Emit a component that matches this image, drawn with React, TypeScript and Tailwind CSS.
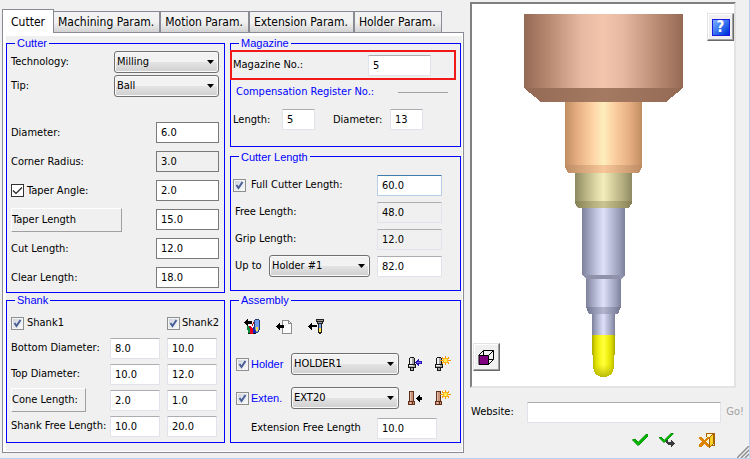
import * as React from "react";

function Check({ id, flat }: { id: string; flat?: boolean }) {
  return (
    <span className="relative block size-[13px] shrink-0">
      <input
        id={id}
        type="checkbox"
        defaultChecked
        className={`peer block size-[13px] appearance-none border ${
          flat
            ? "border-[#333] bg-white"
            : "border-[#8e8f8f] bg-linear-to-br from-[#c9d0d8] to-white shadow-[inset_0_0_0_1px_#f4f4f4]"
        }`}
      />
      <svg
        viewBox="0 0 13 13"
        className="pointer-events-none absolute inset-0 hidden peer-checked:block"
      >
        <path
          d={flat ? "M2 6.5 5 9.5 11 3.5" : "M3.5 6 5.5 9 9.5 3"}
          fill="none"
          stroke={flat ? "#222" : "#4a5f97"}
          strokeWidth={flat ? 1.2 : 2}
        />
      </svg>
    </span>
  );
}

function Select({
  id,
  label,
  value,
  className,
}: {
  id: string;
  label?: string;
  value: string;
  className: string;
}) {
  return (
    <span className={`relative block h-[22px] ${className}`}>
      <select
        id={id}
        aria-label={label}
        defaultValue={value}
        className="block h-full w-full appearance-none rounded-[3px] border border-[#707070] bg-linear-to-b from-[#f2f2f2] from-50% via-[#e4e4e4] via-50% to-[#cfcfcf] pl-[2px] shadow-[inset_0_0_0_1px_#fafafa]"
      >
        <option>{value}</option>
      </select>
      <svg
        viewBox="0 0 7 4"
        className="pointer-events-none absolute top-[9px] right-[5px] h-1 w-[7px]"
      >
        <path d="M0 0H7L3.5 4Z" fill="#000" />
      </svg>
    </span>
  );
}

function Field({
  id,
  label,
  value,
  className,
  kind = "soft",
  off,
}: {
  id: string;
  label?: string;
  value: string;
  className: string;
  kind?: "soft" | "hard" | "focus";
  off?: boolean;
}) {
  const edge = {
    soft: "border-[#e2e3ea] border-t-[#abadb3] rounded-[1px]",
    hard: "border-[#7a7a7a]",
    focus: "border-[#b5cfe7] border-t-[#3d7bad] rounded-[1px]",
  }[kind];
  return (
    <input
      id={id}
      aria-label={label}
      defaultValue={value}
      readOnly={off}
      className={`block h-[21px] shrink-0 border pl-1 ${edge} ${
        off ? "bg-[#f0f0f0]" : "bg-white"
      } ${className}`}
    />
  );
}

function Group({
  title,
  children,
}: {
  title: string;
  children: React.ReactNode;
}) {
  return (
    <fieldset className="min-w-0 border border-[#0000ff]">
      <legend className="ml-2 h-[14px] px-[2px] font-['Liberation_Sans',sans-serif] leading-[14px] text-[#0000ff]">
        {title}
      </legend>
      {children}
    </fieldset>
  );
}

function RaisedButton({
  children,
  className,
}: {
  children: React.ReactNode;
  className: string;
}) {
  return (
    <button
      className={`block h-6 border border-t-white border-r-[#a0a0a0] border-b-[#a0a0a0] border-l-white text-left ${className}`}
    >
      {children}
    </button>
  );
}

function IconButton({
  label,
  children,
}: {
  label: string;
  children: React.ReactNode;
}) {
  return (
    <button aria-label={label} className="block size-4 shrink-0">
      <svg viewBox="0 0 16 16" className="size-4" shapeRendering="crispEdges">
        {children}
      </svg>
    </button>
  );
}

function ToolLibraryIcon() {
  return (
    <>
      <path d="M0 3h1V2h1V1h1V0h1v2h4v3H4v2H3V6H2V5H1V4H0Z" fill="#000" />
      <path d="M3 7h3v8H5v-1H4v-3H3Z" fill="#008a3c" />
      <path d="M6 7h3v8H6Z" fill="#e00020" />
      <path d="M9 8h3v7H9Z" fill="#1020d0" />
      <path d="M5 5h2v1h1v1h1v2H8V8H7V7H5ZM9 4h1v2H9Z" fill="#fff" />
      <path d="M5 7h1v1h1v1H5ZM9 3h1v2H9ZM8 5h1v2H8Z" fill="#c00018" />
      <path d="M11 1h4v10h-1v2h-2v-2h-1Z" fill="#6f9cf0" />
      <path d="M12 8h2v4h-2Z" fill="#ffe14a" />
      <path d="M11 0h4v1h-4ZM10 1h1v10h-1ZM15 1h1v10h-1ZM11 11h1v2h2v-2h1v2h-1v1h-2v-1h-1Z" fill="#24406e" />
      <path d="M4 14h2v1H4ZM9 14h3v1H9Z" fill="#111" />
    </>
  );
}

function ImportPageIcon() {
  return (
    <>
      <path d="M6.5 1.5h6l3 3v10h-9Z" fill="#fafafa" stroke="#8c8c8c" />
      <path d="M12.5 1.5v3h3" fill="none" stroke="#8c8c8c" />
      <path d="M0 7h1V6h1V5h1V4h1v2h4v3H4v2H3v-1H2V9H1V8H0Z" fill="#000" />
    </>
  );
}

function ImportToolIcon() {
  return (
    <>
      <path d="M0 7h1V6h1V5h1V4h1v2h5v2H4v3H3v-1H2V9H1V8H0Z" fill="#000" />
      <path d="M8 0h8v3h-1v2H9V3H8Z" fill="#222" />
      <path d="M9 1h6v1H9ZM10 3h4v1h-4Z" fill="#9c9c9c" />
      <path d="M10 5h4v9h-1v1h-2v-1h-1Z" fill="#222" />
      <path d="M11 5h2v4h-2Z" fill="#7da6f2" />
      <path d="M11 9h2v4h-2Z" fill="#ffe14a" />
    </>
  );
}

function Star() {
  return (
    <>
      <path
        d="M10 0h1v2h1v1h1V1h1v2h-1v1h3v1h-3v1h1v2h-1V6h-1v1h-1v2h-1V7H9V6H8v2H7V6h1V5H5V4h3V3H7V1h1v2h1V2h1Z"
        fill="#f59a00"
      />
      <path d="M8 2h5v5H8Z" fill="#ffb31a" />
      <path d="M9 3h3v3H9Z" fill="#ffee58" />
    </>
  );
}

function HolderShape() {
  return (
    <>
      <path d="M2 1h4v1h1v6h1v4H6v3H2v-3H0V8h1V2h1Z" fill="#151515" />
      <path d="M2 2h4v6H2ZM1 9h6v2H1ZM3 12h2v2H3Z" fill="#a9a9a9" />
      <path d="M2 2h2v6H2ZM1 9h4v1H1Z" fill="#f2f2f2" />
    </>
  );
}

function ExtensionShape() {
  return (
    <>
      <path d="M1 1h5v10h1v4H0v-4h1Z" fill="#60301a" />
      <path d="M2 2h3v9H2ZM1 12h5v2H1Z" fill="#c9947a" />
      <path d="M2 2h1v9H2ZM2 12h1v2H2Z" fill="#e6bda8" />
      <path d="M4 12h1v2H4Z" fill="#60301a" />
    </>
  );
}

function ToolPreview() {
  const stops: Record<string, string[]> = {
    holder: ["#946a55", "#b98a72", "#e8b9a2", "#f2c5ad"],
    arbor: ["#c08d62", "#e6ae82", "#fdd3a5", "#feeebd"],
    ext: ["#8e8961", "#b3ad7f", "#dcd6a4", "#f3edbb"],
    shank: ["#7d8099", "#9fa2bd", "#c6c9e4", "#dde0f8"],
    tip: ["#aaaa00", "#dddd00", "#f8f820", "#ffff3c"],
  };
  return (
    <svg
      viewBox="-1 0 160 364"
      className="block h-[364px] w-[160px]"
      role="img"
      aria-label="Tool assembly"
    >
      <defs>
        {Object.entries(stops).map(([name, c]) => (
          <linearGradient key={name} id={name}>
            <stop offset="0" stopColor={c[0]} />
            <stop offset=".16" stopColor={c[1]} />
            <stop offset=".36" stopColor={c[2]} />
            <stop offset=".5" stopColor={c[3]} />
            <stop offset=".62" stopColor={c[2]} />
            <stop offset=".84" stopColor={c[1]} />
            <stop offset="1" stopColor={c[0]} />
          </linearGradient>
        ))}
        <linearGradient id="holderEdge">
          <stop offset="0" stopColor="#946a55" />
          <stop offset=".5" stopColor="#a47a62" />
          <stop offset="1" stopColor="#946a55" />
        </linearGradient>
        <linearGradient id="arborEdge">
          <stop offset="0" stopColor="#bd8b62" />
          <stop offset=".5" stopColor="#f8c799" />
          <stop offset="1" stopColor="#bd8b62" />
        </linearGradient>
        <linearGradient id="tipEnd" x2="0" y2="1">
          <stop offset=".7" stopColor="#b8b800" stopOpacity="0" />
          <stop offset="1" stopColor="#a8a800" stopOpacity=".8" />
        </linearGradient>
      </defs>
      <g shapeRendering="crispEdges">
        <path d="M0 0h159v74H0Z" fill="url(#holder)" />
        <path d="M0 74h159L142 88H17Z" fill="url(#holderEdge)" />
        <path d="M41 88h77v63H41Z" fill="url(#arbor)" />
        <path d="M41 151h77v2l-3 6H44l-3-6Z" fill="url(#arborEdge)" />
        <path d="M51 159h57v28H51Z" fill="url(#ext)" />
        <path d="M51 187h57v2l-3 5H54l-3-5Z" fill="url(#ext)" />
        <path d="M51 187h57v2l-3 5H54l-3-5Z" fill="#6d6636" opacity=".3" />
        <path d="M58 194h43v67H58Z" fill="url(#shank)" />
        <path d="M58 261h43l-4 4H62Z" fill="#8f92aa" />
        <path d="M62 265h35v28H62Z" fill="url(#shank)" />
        <path d="M62 293h35l-3 7H65Z" fill="url(#shank)" />
        <path d="M62 293h35l-3 7H65Z" fill="#50546e" opacity=".3" />
        <path d="M68 300h23v21H68Z" fill="url(#shank)" />
        <path
          d="M68 321h23v20h-1v12q-1 10-10.500 10T69 353V341h-1Z"
          fill="url(#tip)"
        />
        <path
          d="M68 321h23v20h-1v12q-1 10-10.500 10T69 353V341h-1Z"
          fill="url(#tipEnd)"
        />
      </g>
    </svg>
  );
}

function ViewButton({
  label,
  className,
  children,
}: {
  label: string;
  className: string;
  children: React.ReactNode;
}) {
  return (
    <button
      aria-label={label}
      className={`absolute flex h-7 w-[27px] items-center justify-center border border-t-[#e3e3e3] border-r-[#696969] border-b-[#696969] border-l-[#e3e3e3] bg-[#f0f0f0] shadow-[inset_-1px_-1px_0_#a0a0a0,inset_1px_1px_0_#fff] ${className}`}
    >
      {children}
    </button>
  );
}

const tabs = [
  "Machining Param.",
  "Motion Param.",
  "Extension Param.",
  "Holder Param.",
];

const cutterRows = [
  { id: "diameter", label: "Diameter:", value: "6.0" },
  { id: "corner", label: "Corner Radius:", value: "3.0", off: true },
  { id: "taper-angle", label: "Taper Angle:", value: "2.0", check: true },
  { id: "taper-length", label: "Taper Length", value: "15.0", button: true },
  { id: "cut-length", label: "Cut Length:", value: "12.0" },
  { id: "clear-length", label: "Clear Length:", value: "18.0" },
];

const shankRows = [
  { id: "bottom", label: "Bottom Diameter:", a: "8.0", b: "10.0" },
  { id: "top", label: "Top Diameter:", a: "10.0", b: "12.0" },
  { id: "cone", label: "Cone Length:", a: "2.0", b: "1.0", button: true },
  { id: "shank-free", label: "Shank Free Length:", a: "10.0", b: "20.0" },
];

function CutterGroup() {
  return (
    <Group title="Cutter">
      <div className="pr-[5px] pl-1">
        <div className="flex h-6 items-center justify-between">
          <label htmlFor="technology">Technology:</label>
          <Select id="technology" value="Milling" className="w-[105px]" />
        </div>
        <div className="flex h-6 items-center justify-between">
          <label htmlFor="tip-type">Tip:</label>
          <Select id="tip-type" value="Ball" className="w-[105px]" />
        </div>
        <div className="mt-5">
          {cutterRows.map((r) => (
            <div key={r.id} className="flex h-[29px] items-center justify-between">
              {r.button ? (
                <RaisedButton className="w-[111px]">{r.label}</RaisedButton>
              ) : r.check ? (
                <div className="flex items-center gap-[3px]">
                  <Check id="taper-on" flat />
                  <label htmlFor="taper-on">{r.label}</label>
                </div>
              ) : (
                <label htmlFor={r.id}>{r.label}</label>
              )}
              <Field
                id={r.id}
                label={r.label}
                value={r.value}
                kind="hard"
                off={r.off}
                className="w-[63px]"
              />
            </div>
          ))}
        </div>
      </div>
    </Group>
  );
}

function ShankGroup() {
  return (
    <Group title="Shank">
      <div className="pt-1 pr-[7px] pb-[3px] pl-1">
        <div className="flex h-6 items-center justify-between">
          <div className="flex items-center gap-[3px]">
            <Check id="shank1" />
            <label htmlFor="shank1">Shank1</label>
          </div>
          <div className="flex w-[50px] items-center gap-[2px]">
            <Check id="shank2" />
            <label htmlFor="shank2">Shank2</label>
          </div>
        </div>
        {shankRows.map((r) => (
          <div key={r.id} className="flex h-[26px] items-center">
            <div className="min-w-0 flex-1 whitespace-nowrap">
              {r.button ? (
                <RaisedButton className="w-[75px]">{r.label}</RaisedButton>
              ) : (
                <label htmlFor={`${r.id}-1`}>{r.label}</label>
              )}
            </div>
            <div className="flex gap-[7px]">
              <Field
                id={`${r.id}-1`}
                label={`${r.label} 1`}
                value={r.a}
                className="w-[50px]"
              />
              <Field
                id={`${r.id}-2`}
                label={`${r.label} 2`}
                value={r.b}
                className="w-[50px]"
              />
            </div>
          </div>
        ))}
      </div>
    </Group>
  );
}

function MagazineGroup() {
  return (
    <Group title="Magazine">
      <div className="mr-1 -ml-px flex h-[30px] items-center justify-between border-2 border-[#f01818] pr-[23px] pl-px">
        <label htmlFor="magazine">Magazine No.:</label>
        <Field id="magazine" value="5" className="w-[63px]" />
      </div>
      <div className="flex h-6 items-center justify-between pr-3 pl-[5px] text-[#0000ff]">
        <span>Compensation Register No.:</span>
        <hr className="w-[50px] border-[#a0a0a0]" />
      </div>
      <div className="flex h-[42px] items-start pt-[5px] pl-[2px] leading-[21px]">
        <label htmlFor="reg-length" className="w-[49px]">
          Length:
        </label>
        <Field id="reg-length" value="5" className="w-[33px]" />
        <label htmlFor="reg-diameter" className="ml-[18px] w-[57px]">
          Diameter:
        </label>
        <Field id="reg-diameter" value="13" className="w-[33px]" />
      </div>
    </Group>
  );
}

function CutterLengthGroup() {
  return (
    <Group title="Cutter Length">
      <div className="pt-2 pr-[18px] pb-[10px] pl-[2px]">
        <div className="flex h-[27px] items-center justify-between">
          <div className="flex items-center gap-[5px]">
            <Check id="full-on" />
            <label htmlFor="full-on">Full Cutter Length:</label>
          </div>
          <Field
            id="full-length"
            label="Full Cutter Length"
            value="60.0"
            kind="focus"
            className="w-[65px]"
          />
        </div>
        <div className="flex h-[27px] items-center justify-between pl-[2px]">
          <label htmlFor="free-length">Free Length:</label>
          <Field id="free-length" value="48.0" off className="w-[65px]" />
        </div>
        <div className="flex h-[27px] items-center justify-between pl-[2px]">
          <label htmlFor="grip-length">Grip Length:</label>
          <Field id="grip-length" value="12.0" off className="w-[65px]" />
        </div>
        <div className="flex h-[27px] items-center pl-[2px]">
          <label htmlFor="up-to" className="w-[34px]">
            Up to
          </label>
          <Select id="up-to" value="Holder #1" className="w-[101px]" />
          <Field
            id="up-to-length"
            label="Up to length"
            value="82.0"
            className="ml-auto w-[65px]"
          />
        </div>
      </div>
    </Group>
  );
}

function AssemblyGroup() {
  return (
    <Group title="Assembly">
      <div className="pr-[9px] pb-px pl-[5px]">
        <div className="flex h-10 items-center gap-4 pl-2">
          <IconButton label="Load from library">
            <ToolLibraryIcon />
          </IconButton>
          <IconButton label="Load from file">
            <ImportPageIcon />
          </IconButton>
          <IconButton label="Load tool">
            <ImportToolIcon />
          </IconButton>
        </div>
        <div className="flex h-[34px] items-center">
          <div className="flex w-[55px] items-center gap-[2px] text-[#0000ff]">
            <Check id="holder-on" />
            <label
              htmlFor="holder-on"
              className="font-['Liberation_Sans',sans-serif]"
            >
              Holder
            </label>
          </div>
          <Select
            id="holder-name"
            label="Holder name"
            value="HOLDER1"
            className="w-[108px]"
          />
          <div className="ml-auto flex gap-[11px]">
            <IconButton label="Load holder">
              <HolderShape />
              <path
                d="M7 6h1V5h1V4h1V3h1v2h3v3h-3v2h-1V9H9V8H8V7H7Z"
                fill="#2815b8"
              />
              <path d="M9 6h4v1H9Z" fill="#7b6cf0" />
            </IconButton>
            <IconButton label="New holder">
              <HolderShape />
              <Star />
            </IconButton>
          </div>
        </div>
        <div className="flex h-[34px] items-center">
          <div className="flex w-[55px] items-center gap-[2px] text-[#0000ff]">
            <Check id="exten-on" />
            <label
              htmlFor="exten-on"
              className="font-['Liberation_Sans',sans-serif]"
            >
              Exten.
            </label>
          </div>
          <Select
            id="exten-name"
            label="Extension name"
            value="EXT20"
            className="w-[108px]"
          />
          <div className="ml-auto flex gap-[11px]">
            <IconButton label="Load extension">
              <ExtensionShape />
              <path
                d="M8 8h1V7h1V6h1V5h1v2h2v3h-2v2h-1v-1h-1v-1H9V9H8Z"
                fill="#000"
              />
            </IconButton>
            <IconButton label="New extension">
              <ExtensionShape />
              <Star />
            </IconButton>
          </div>
        </div>
        <div className="flex h-[26px] items-center justify-between pr-[14px] pl-[15px]">
          <label htmlFor="ext-free">Extension Free Length</label>
          <Field id="ext-free" value="10.0" className="w-[60px]" />
        </div>
      </div>
    </Group>
  );
}

export default function App() {
  return (
    <main className="grid min-h-screen grid-cols-[464fr_285fr] border-r border-b border-[#b9d1ea] bg-[#f0f0f0] font-['DejaVu_Sans_Condensed','Noto_Sans',sans-serif] text-[11px] leading-[14px] text-black">
      <section className="flex flex-col pt-[9px] pb-[5px] pl-[2px]">
        <div
          role="tablist"
          className="relative z-10 -mb-px flex items-end text-[12px] whitespace-nowrap"
        >
          <button
            role="tab"
            aria-selected="true"
            className="h-6 w-[52px] border border-b-0 border-[#898c95] bg-white"
          >
            Cutter
          </button>
          {tabs.map((t) => (
            <button
              key={t}
              role="tab"
              aria-selected="false"
              className="h-[22px] border border-r-2 border-l-0 border-[#898c95] bg-linear-to-b from-[#f2f2f2] from-50% to-[#d2d2d2] pr-[5px] pl-1 last:border-r"
            >
              {t}
            </button>
          ))}
        </div>
        <div className="flex grow border border-[#898c95] bg-white pt-[3px] pr-px pb-px pl-[3px]">
          <div className="grid grow grid-cols-[219fr_231fr] gap-x-[5px] bg-[#f0f0f0] pr-px pb-2">
            <div className="flex min-w-0 flex-col justify-between">
              <CutterGroup />
              <ShankGroup />
            </div>
            <div className="flex min-w-0 flex-col justify-between">
              <MagazineGroup />
              <CutterLengthGroup />
              <AssemblyGroup />
            </div>
          </div>
        </div>
      </section>

      <section className="relative flex flex-col pt-[2px] pl-[6px]">
        <div className="relative mr-[13px] flex h-[386px] justify-center border-2 border-t-[#808080] border-r-[#e3e3e3] border-b-[#e3e3e3] border-l-[#808080] bg-white pt-[10px]">
          <ToolPreview />
          <ViewButton label="Help" className="top-[9px] right-0">
            <span className="flex h-[17px] w-[18px] items-center justify-center border border-[#1a1ae0] bg-linear-to-br from-[#7fb2ff] to-[#0018d8] text-[15px] font-bold text-white">
              ?
            </span>
          </ViewButton>
          <ViewButton label="View" className="bottom-[15px] left-px">
            <svg viewBox="0 0 17 17" className="size-[17px]">
              <path
                d="M5.500 1.500h10v9h-10ZM.5 6.500l5-5M10.500 6.500l5-5M10.500 15.500l5-5"
                fill="none"
                stroke="#000"
              />
              <path d="M1 6.500h9.500v9H1Z" fill="#800080" stroke="#000" />
            </svg>
          </ViewButton>
        </div>
        <div className="mt-3 flex h-6 items-center pr-[5px] pl-px">
          <label htmlFor="website" className="w-[56px]">
            Website:
          </label>
          <Field id="website" value="" className="w-0 shrink grow" />
          <button className="ml-[5px] text-[#a0a0a0]">Go!</button>
        </div>
        <div className="mt-2 flex justify-end pr-[34px]">
          <div className="flex gap-[11px]">
            <IconButton label="Accept">
              <path
                d="M1 7h2l3 3 8-8h2v2L7 13H5L0 8Z"
                fill="#00b400"
                stroke="#087808"
                strokeWidth=".5"
              />
            </IconButton>
            <IconButton label="Accept and continue">
              <path
                d="M0 5h2l3 3 7-7h2v1L6 10H4L0 6Z"
                fill="#00b400"
                stroke="#087808"
                strokeWidth=".5"
              />
              <path d="M7 8h2v2h3V8h1v1h1v1h1v1h1v1h-1v1h-1v1h-1v1h-1v-2H9v-1H8v-1H7Z" fill="#3b3b3b" />
            </IconButton>
          </div>
          <div className="ml-6">
            <IconButton label="Exit">
              <path d="M7 5V1h8v12h-3" fill="none" stroke="#a86400" />
              <path d="M8 2h6L10 5v5H8Z" fill="#fff6c8" />
              <path d="M10.500 5.500l4-4v10l-4 4Z" fill="#ffd428" stroke="#a86400" />
              <path
                d="M0 5h2l3 3 3-3h2v1L7 9.500l3 3.500v2H8l-3-3-3 3H0v-2l3-3.500L0 6Z"
                fill="#dc8400"
              />
            </IconButton>
          </div>
        </div>
        <svg
          viewBox="0 0 12 12"
          className="absolute right-0 bottom-0 size-3"
          aria-hidden="true"
        >
          <path
            d="M0 12 12 0M4 12l8-8M8 12l4-4"
            fill="none"
            stroke="#8f8f8f"
            strokeWidth="1.500"
          />
        </svg>
      </section>
    </main>
  );
}
